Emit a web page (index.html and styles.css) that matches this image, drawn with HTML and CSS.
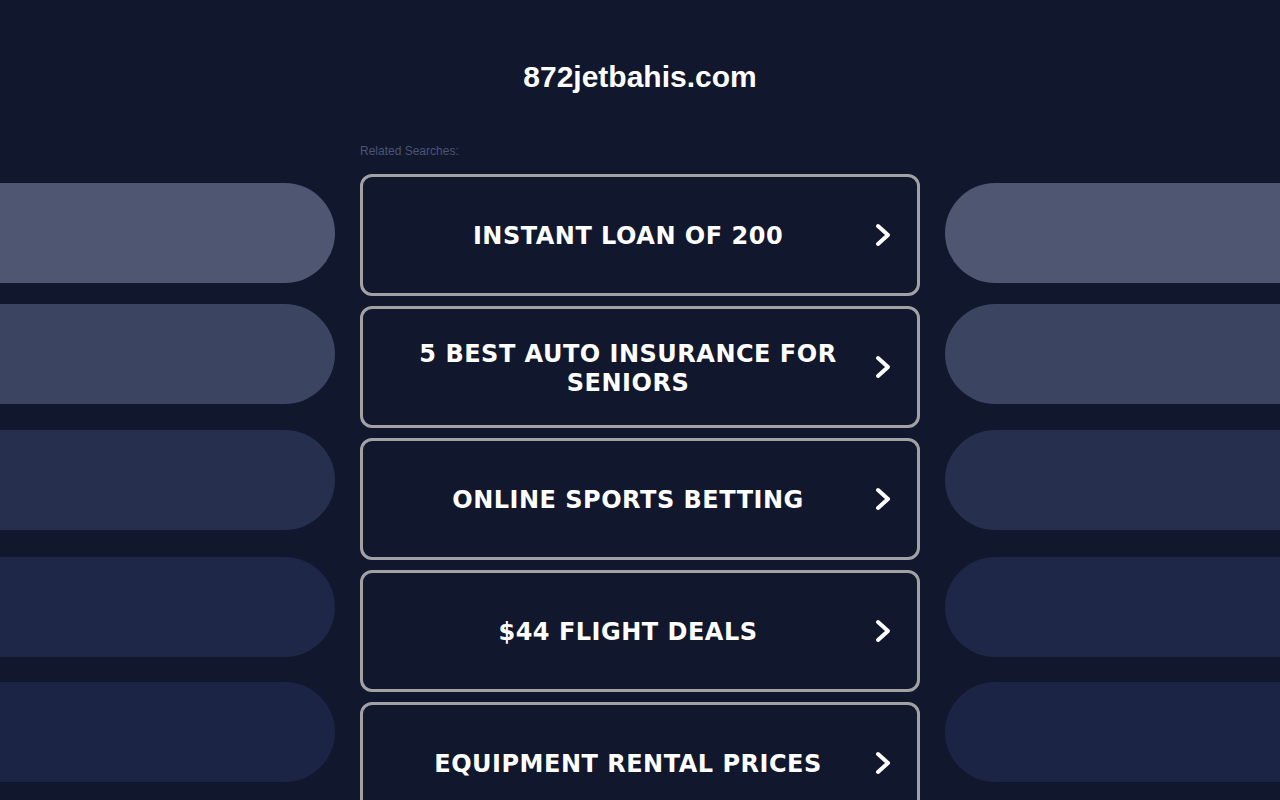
FILE: index.html
```html
<!DOCTYPE html>
<html lang="en">
<head>
<meta charset="utf-8">
<title>872jetbahis.com</title>
<link rel="stylesheet" href="styles.css">
</head>
<body>
<header class="header">
  <h1 class="title">872jetbahis.com</h1>
</header>
<div class="layout">
  <div class="side side-left">
    <div class="pill pill-1"></div>
    <div class="pill pill-2"></div>
    <div class="pill pill-3"></div>
    <div class="pill pill-4"></div>
    <div class="pill pill-5"></div>
  </div>
  <main class="main">
    <div class="related">Related Searches:</div>
    <div class="links">
      <a class="link" href="#"><span class="link-text">INSTANT LOAN OF 200</span><svg class="chev" viewBox="0 0 16 24"><polyline points="3,3 13,12 3,21"/></svg></a>
      <a class="link" href="#"><span class="link-text">5 BEST AUTO INSURANCE FOR SENIORS</span><svg class="chev" viewBox="0 0 16 24"><polyline points="3,3 13,12 3,21"/></svg></a>
      <a class="link" href="#"><span class="link-text">ONLINE SPORTS BETTING</span><svg class="chev" viewBox="0 0 16 24"><polyline points="3,3 13,12 3,21"/></svg></a>
      <a class="link" href="#"><span class="link-text">$44 FLIGHT DEALS</span><svg class="chev" viewBox="0 0 16 24"><polyline points="3,3 13,12 3,21"/></svg></a>
      <a class="link" href="#"><span class="link-text">EQUIPMENT RENTAL PRICES</span><svg class="chev" viewBox="0 0 16 24"><polyline points="3,3 13,12 3,21"/></svg></a>
    </div>
  </main>
  <div class="side side-right">
    <div class="pill pill-1"></div>
    <div class="pill pill-2"></div>
    <div class="pill pill-3"></div>
    <div class="pill pill-4"></div>
    <div class="pill pill-5"></div>
  </div>
</div>
</body>
</html>
```

FILE: styles.css
```css
html, body {
  margin: 0;
  padding: 0;
  overflow: hidden;
  background: #11172c;
}
body {
  font-family: "Liberation Sans", Arial, sans-serif;
  color: #ffffff;
  height: 800px;
}
.header {
  padding-top: 59px;
  text-align: center;
}
.title {
  margin: 0;
  font-size: 30px;
  line-height: 36px;
  font-weight: bold;
  color: #ffffff;
}
.layout {
  display: grid;
  grid-template-columns: 1fr 560px 1fr;
  column-gap: 25px;
  margin-top: 49px;
}
.side {
  display: flex;
  flex-direction: column;
  gap: 25px;
  padding-top: 39px;
}
.pill {
  height: 100px;
  flex: none;
}
.side-left .pill {
  border-radius: 0 50px 50px 0;
}
.side-right .pill {
  border-radius: 50px 0 0 50px;
}
.pill-1 { background: #4e5672; }
.pill-2 { background: #3b4461; margin-top: -4px; }
.pill-3 { background: #262f4d; margin-top: 1px; }
.pill-4 { background: #1e2747; margin-top: 2px; }
.pill-5 { background: #1c2445; }
.related {
  font-size: 12px;
  line-height: 14px;
  color: #4a5577;
  height: 14px;
}
.links {
  display: flex;
  flex-direction: column;
  gap: 10px;
  margin-top: 16px;
}
.link {
  display: flex;
  align-items: center;
  height: 116px;
  border: 3px solid #a2a2a5;
  border-radius: 12px;
  padding: 0 26px 0 18px;
  text-decoration: none;
  color: #ffffff;
}
.link-text {
  flex: 1;
  text-align: center;
  font-family: "DejaVu Sans", Verdana, sans-serif;
  font-weight: bold;
  font-size: 24px;
  letter-spacing: 0.5px;
  line-height: 29px;
  padding: 3px 10px 0;
}
.chev {
  width: 16px;
  height: 24px;
  flex: none;
}
.chev polyline {
  fill: none;
  stroke: #ffffff;
  stroke-width: 4;
  stroke-linecap: round;
  stroke-linejoin: round;
}
```
